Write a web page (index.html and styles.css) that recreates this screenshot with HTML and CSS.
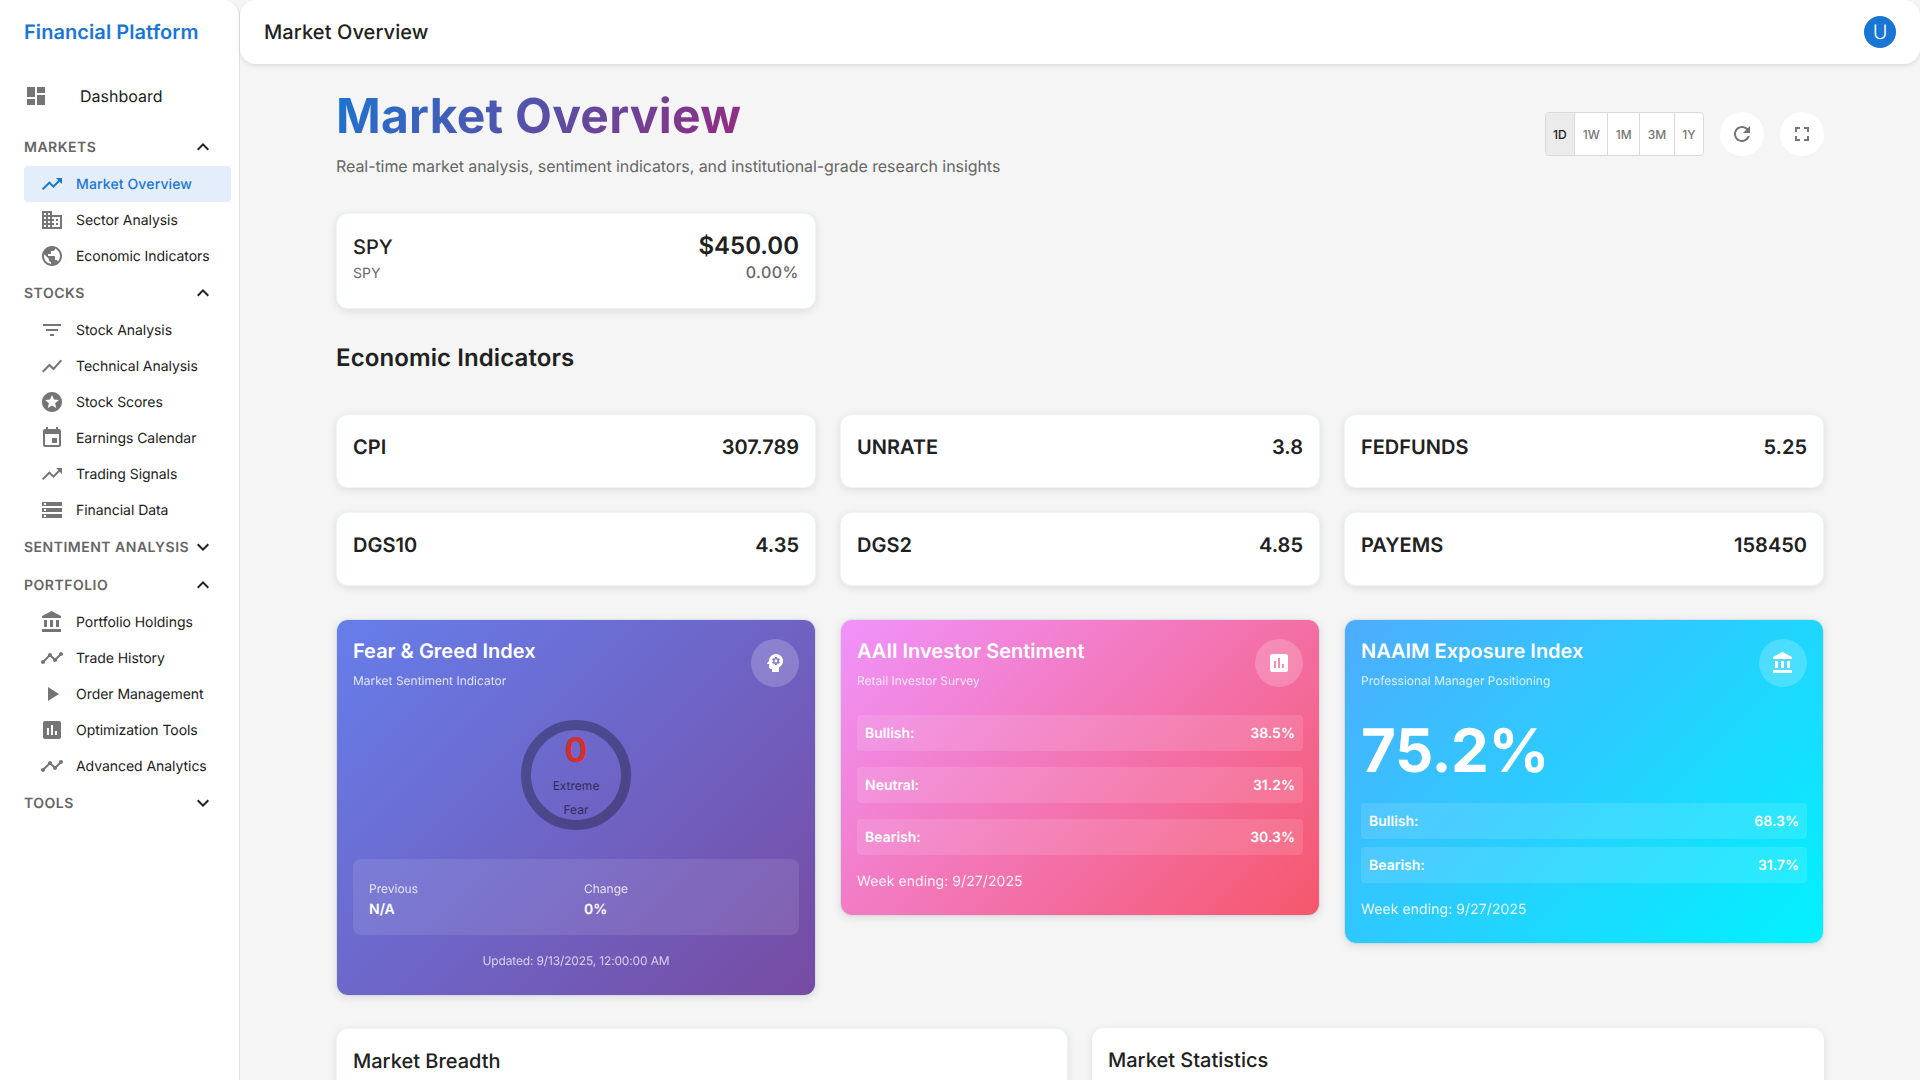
FILE: index.html
```html
<!DOCTYPE html>
<html lang="en">

<head>
    <meta charset="UTF-8">
    <meta name="viewport" content="width=device-width, initial-scale=1.0">
    <title>Market Overview</title>
    <link rel="stylesheet" href="styles.css">
</head>

<body>
    <svg class="icon-defs" aria-hidden="true">
        <symbol id="i-dashboard" viewBox="0 0 24 24"><path d="M3 13h8V3H3v10zm0 8h8v-6H3v6zm10 0h8V11h-8v10zm0-18v6h8V3h-8z"/></symbol>
        <symbol id="i-trending" viewBox="0 0 24 24"><path d="M16 6l2.29 2.29-4.88 4.88-4-4L2 16.59 3.41 18l6-6 4 4 6.3-6.29L22 12V6z"/></symbol>
        <symbol id="i-business" viewBox="0 0 24 24"><path d="M12 7V3H2v18h20V7H12zM6 19H4v-2h2v2zm0-4H4v-2h2v2zm0-4H4V9h2v2zm0-4H4V5h2v2zm4 12H8v-2h2v2zm0-4H8v-2h2v2zm0-4H8V9h2v2zm0-4H8V5h2v2zm10 12h-8v-2h2v-2h-2v-2h2v-2h-2V9h8v10zm-2-8h-2v2h2v-2zm0 4h-2v2h2v-2z"/></symbol>
        <symbol id="i-public" viewBox="0 0 24 24"><path d="M12 2C6.48 2 2 6.48 2 12s4.48 10 10 10 10-4.48 10-10S17.52 2 12 2zm-1 17.93c-3.95-.49-7-3.85-7-7.93 0-.62.08-1.21.21-1.79L9 15v1c0 1.1.9 2 2 2v1.93zm6.9-2.54c-.26-.81-1-1.39-1.9-1.39h-1v-3c0-.55-.45-1-1-1H8v-2h2c.55 0 1-.45 1-1V7h2c1.1 0 2-.9 2-2v-.41c2.93 1.19 5 4.06 5 7.41 0 2.08-.8 3.97-2.1 5.39z"/></symbol>
        <symbol id="i-filter" viewBox="0 0 24 24"><path d="M10 18h4v-2h-4v2zM3 6v2h18V6H3zm3 7h12v-2H6v2z"/></symbol>
        <symbol id="i-chart" viewBox="0 0 24 24"><path d="M3.5 18.49l6-6.01 4 4L22 6.92l-1.41-1.41-7.09 7.97-4-4L2 16.99z"/></symbol>
        <symbol id="i-stars" viewBox="0 0 24 24"><path d="M11.99 2C6.47 2 2 6.48 2 12s4.47 10 9.99 10C17.52 22 22 17.52 22 12S17.52 2 11.99 2zm4.24 16L12 15.45 7.77 18l1.12-4.81-3.73-3.23 4.92-.42L12 5l1.92 4.53 4.92.42-3.73 3.23L16.23 18z"/></symbol>
        <symbol id="i-event" viewBox="0 0 24 24"><path d="M17 12h-5v5h5v-5zM16 1v2H8V1H6v2H5c-1.11 0-1.99.9-1.99 2L3 19c0 1.1.89 2 2 2h14c1.1 0 2-.9 2-2V5c0-1.1-.9-2-2-2h-1V1h-2zm3 18H5V8h14v11z"/></symbol>
        <symbol id="i-storage" viewBox="0 0 24 24"><path d="M2 20h20v-4H2v4zm2-3h2v2H4v-2zM2 4v4h20V4H2zm4 3H4V5h2v2zm-4 7h20v-4H2v4zm2-3h2v2H4v-2z"/></symbol>
        <symbol id="i-bank" viewBox="0 0 24 24"><path d="M4 10v7h3v-7H4zm6 0v7h3v-7h-3zM2 22h19v-3H2v3zm14-12v7h3v-7h-3zm-4.5-9L2 6v2h19V6l-9.5-5z"/></symbol>
        <symbol id="i-timeline" viewBox="0 0 24 24"><path d="M23 8c0 1.1-.9 2-2 2-.18 0-.35-.02-.51-.07l-3.56 3.55c.05.16.07.34.07.52 0 1.1-.9 2-2 2s-2-.9-2-2c0-.18.02-.36.07-.52l-2.55-2.55c-.16.05-.34.07-.52.07s-.36-.02-.52-.07l-4.55 4.56c.05.16.07.33.07.51 0 1.1-.9 2-2 2s-2-.9-2-2 .9-2 2-2c.18 0 .35.02.51.07l4.56-4.55C8.02 9.36 8 9.18 8 9c0-1.1.9-2 2-2s2 .9 2 2c0 .18-.02.36-.07.52l2.55 2.55c.16-.05.34-.07.52-.07s.36.02.52.07l3.55-3.56C19.02 8.35 19 8.18 19 8c0-1.1.9-2 2-2s2 .9 2 2z"/></symbol>
        <symbol id="i-play" viewBox="0 0 24 24"><path d="M8 5v14l11-7z"/></symbol>
        <symbol id="i-assessment" viewBox="0 0 24 24"><path d="M19 3H5c-1.1 0-2 .9-2 2v14c0 1.1.9 2 2 2h14c1.1 0 2-.9 2-2V5c0-1.1-.9-2-2-2zM9 17H7v-7h2v7zm4 0h-2V7h2v10zm4 0h-2v-4h2v4z"/></symbol>
        <symbol id="i-less" viewBox="0 0 24 24"><path d="M12 8l-6 6 1.41 1.41L12 10.83l4.59 4.58L18 14z"/></symbol>
        <symbol id="i-more" viewBox="0 0 24 24"><path d="M16.59 8.59L12 13.17 7.41 8.59 6 10l6 6 6-6z"/></symbol>
        <symbol id="i-refresh" viewBox="0 0 24 24"><path d="M17.65 6.35C16.2 4.9 14.21 4 12 4c-4.42 0-7.99 3.58-7.99 8s3.57 8 7.99 8c3.73 0 6.84-2.55 7.73-6h-2.08c-.82 2.33-3.04 4-5.65 4-3.31 0-6-2.69-6-6s2.69-6 6-6c1.66 0 3.14.69 4.22 1.78L13 11h7V4l-2.35 2.35z"/></symbol>
        <symbol id="i-fullscreen" viewBox="0 0 24 24"><path d="M7 14H5v5h5v-2H7v-3zm-2-4h2V7h3V5H5v5zm12 7h-3v2h5v-5h-2v3zM14 5v2h3v3h2V5h-5z"/></symbol>
        <symbol id="i-psychology" viewBox="0 0 24 24"><path d="M13 8.57c-.79 0-1.43.64-1.43 1.43s.64 1.43 1.43 1.43 1.43-.64 1.43-1.43-.64-1.43-1.43-1.43z"/><path d="M13 3C9.25 3 6.2 5.94 6.02 9.64L4.1 12.2c-.25.33-.01.8.4.8H6v3c0 1.1.9 2 2 2h1v3h7v-4.68c2.36-1.12 4-3.53 4-6.32 0-3.87-3.13-7-7-7zm3 7c0 .13-.01.26-.02.39l.83.66c.08.06.1.16.05.25l-.8 1.39c-.05.09-.16.12-.24.09l-.99-.4c-.21.16-.43.29-.67.39L14 13.83c-.01.1-.1.17-.2.17h-1.6c-.1 0-.18-.07-.2-.17l-.15-1.06c-.25-.1-.47-.23-.68-.39l-.99.4c-.09.03-.2 0-.25-.09l-.8-1.39c-.05-.08-.03-.19.05-.25l.84-.66c-.01-.13-.02-.26-.02-.39s.02-.27.04-.39l-.85-.66c-.08-.06-.1-.16-.05-.26l.8-1.38c.05-.09.15-.12.24-.09l1 .4c.2-.15.43-.29.67-.39L12 6.17c.02-.1.1-.17.2-.17h1.6c.1 0 .18.07.2.17l.15 1.06c.24.1.46.23.67.39l1-.4c.09-.03.2 0 .24.09l.8 1.38c.05.09.03.2-.05.26l-.85.66c.03.12.04.25.04.39z"/></symbol>
    </svg>

    <div class="app">
        <aside class="sidebar">
            <div class="brand">Financial Platform</div>
            <a class="dash-link"><svg class="icon"><use href="#i-dashboard"/></svg><span>Dashboard</span></a>

            <div class="nav-head"><span>MARKETS</span><svg class="icon chevron"><use href="#i-less"/></svg></div>
            <a class="nav-item active"><svg class="icon"><use href="#i-trending"/></svg><span>Market Overview</span></a>
            <a class="nav-item"><svg class="icon"><use href="#i-business"/></svg><span>Sector Analysis</span></a>
            <a class="nav-item"><svg class="icon"><use href="#i-public"/></svg><span>Economic Indicators</span></a>

            <div class="nav-head"><span>STOCKS</span><svg class="icon chevron"><use href="#i-less"/></svg></div>
            <a class="nav-item"><svg class="icon"><use href="#i-filter"/></svg><span>Stock Analysis</span></a>
            <a class="nav-item"><svg class="icon"><use href="#i-chart"/></svg><span>Technical Analysis</span></a>
            <a class="nav-item"><svg class="icon"><use href="#i-stars"/></svg><span>Stock Scores</span></a>
            <a class="nav-item"><svg class="icon"><use href="#i-event"/></svg><span>Earnings Calendar</span></a>
            <a class="nav-item"><svg class="icon"><use href="#i-trending"/></svg><span>Trading Signals</span></a>
            <a class="nav-item"><svg class="icon"><use href="#i-storage"/></svg><span>Financial Data</span></a>

            <div class="nav-head"><span>SENTIMENT ANALYSIS</span><svg class="icon chevron"><use href="#i-more"/></svg></div>

            <div class="nav-head"><span>PORTFOLIO</span><svg class="icon chevron"><use href="#i-less"/></svg></div>
            <a class="nav-item"><svg class="icon"><use href="#i-bank"/></svg><span>Portfolio Holdings</span></a>
            <a class="nav-item"><svg class="icon"><use href="#i-timeline"/></svg><span>Trade History</span></a>
            <a class="nav-item"><svg class="icon"><use href="#i-play"/></svg><span>Order Management</span></a>
            <a class="nav-item"><svg class="icon"><use href="#i-assessment"/></svg><span>Optimization Tools</span></a>
            <a class="nav-item"><svg class="icon"><use href="#i-timeline"/></svg><span>Advanced Analytics</span></a>

            <div class="nav-head"><span>TOOLS</span><svg class="icon chevron"><use href="#i-more"/></svg></div>
        </aside>

        <div class="main">
            <header class="topbar">
                <div class="topbar-title">Market Overview</div>
                <div class="avatar">U</div>
            </header>

            <main class="content">
                <div class="page-head">
                    <div>
                        <h1>Market Overview</h1>
                        <p class="subtitle">Real-time market analysis, sentiment indicators, and institutional-grade research insights</p>
                    </div>
                    <div class="head-tools">
                        <div class="timeframes">
                            <button class="selected">1D</button>
                            <button>1W</button>
                            <button>1M</button>
                            <button>3M</button>
                            <button>1Y</button>
                        </div>
                        <button class="round-btn"><svg class="icon"><use href="#i-refresh"/></svg></button>
                        <button class="round-btn"><svg class="icon"><use href="#i-fullscreen"/></svg></button>
                    </div>
                </div>

                <div class="grid-3">
                    <div class="card quote">
                        <div>
                            <div class="quote-name">SPY</div>
                            <div class="quote-sub">SPY</div>
                        </div>
                        <div class="quote-right">
                            <div class="quote-price">$450.00</div>
                            <div class="quote-change">0.00%</div>
                        </div>
                    </div>
                </div>

                <h2 class="section-title">Economic Indicators</h2>

                <div class="grid-3 indicators">
                    <div class="card indicator"><span>CPI</span><span>307.789</span></div>
                    <div class="card indicator"><span>UNRATE</span><span>3.8</span></div>
                    <div class="card indicator"><span>FEDFUNDS</span><span>5.25</span></div>
                    <div class="card indicator"><span>DGS10</span><span>4.35</span></div>
                    <div class="card indicator"><span>DGS2</span><span>4.85</span></div>
                    <div class="card indicator"><span>PAYEMS</span><span>158450</span></div>
                </div>

                <div class="grid-3 sentiment">
                    <div class="card grad grad-fear">
                        <div class="grad-head">
                            <div>
                                <div class="grad-title">Fear &amp; Greed Index</div>
                                <div class="grad-sub">Market Sentiment Indicator</div>
                            </div>
                            <div class="grad-icon"><svg class="icon"><use href="#i-psychology"/></svg></div>
                        </div>
                        <div class="gauge">
                            <div class="gauge-ring"></div>
                            <div class="gauge-text">
                                <div class="gauge-value">0</div>
                                <div class="gauge-label">Extreme Fear</div>
                            </div>
                        </div>
                        <div class="fear-stats">
                            <div>
                                <div class="stat-label">Previous</div>
                                <div class="stat-value">N/A</div>
                            </div>
                            <div>
                                <div class="stat-label">Change</div>
                                <div class="stat-value">0%</div>
                            </div>
                        </div>
                        <div class="fear-updated">Updated: 9/13/2025, 12:00:00 AM</div>
                    </div>

                    <div class="card grad grad-aaii">
                        <div class="grad-head">
                            <div>
                                <div class="grad-title">AAII Investor Sentiment</div>
                                <div class="grad-sub">Retail Investor Survey</div>
                            </div>
                            <div class="grad-icon"><svg class="icon"><use href="#i-assessment"/></svg></div>
                        </div>
                        <div class="rows rows-wide">
                            <div class="row"><span>Bullish:</span><span>38.5%</span></div>
                            <div class="row"><span>Neutral:</span><span>31.2%</span></div>
                            <div class="row"><span>Bearish:</span><span>30.3%</span></div>
                        </div>
                        <div class="week">Week ending: 9/27/2025</div>
                    </div>

                    <div class="card grad grad-naaim">
                        <div class="grad-head">
                            <div>
                                <div class="grad-title">NAAIM Exposure Index</div>
                                <div class="grad-sub">Professional Manager Positioning</div>
                            </div>
                            <div class="grad-icon"><svg class="icon"><use href="#i-bank"/></svg></div>
                        </div>
                        <div class="big-number">75.2%</div>
                        <div class="rows">
                            <div class="row"><span>Bullish:</span><span>68.3%</span></div>
                            <div class="row"><span>Bearish:</span><span>31.7%</span></div>
                        </div>
                        <div class="week">Week ending: 9/27/2025</div>
                    </div>
                </div>

                <div class="grid-2">
                    <div class="card bottom-card"><div class="bottom-title">Market Breadth</div></div>
                    <div class="bottom-card plain"><div class="bottom-title">Market Statistics</div></div>
                </div>
            </main>
        </div>
    </div>
</body>

</html>
```

FILE: styles.css
```css
* {
    margin: 0;
    padding: 0;
    box-sizing: border-box;
}

body,
html {
    height: 100vh;
    overflow: hidden;
}

body {
    font-family: Inter, "Liberation Sans", sans-serif;
    text-rendering: geometricPrecision;
    background: #f5f5f5;
    color: #212121;
}

.icon-defs {
    display: none;
}

.icon {
    width: 24px;
    height: 24px;
    flex: none;
    fill: #757575;
}

.app {
    display: flex;
    height: 100vh;
}

/* sidebar */
.sidebar {
    width: 240px;
    flex: none;
    background: white;
    border-right: 1px solid #e0e0e0;
    border-top-right-radius: 16px;
}

.brand {
    height: 64px;
    padding-left: 24px;
    display: flex;
    align-items: center;
    font-size: 20px;
    font-weight: 600;
    letter-spacing: 0.07px;
    color: #1976d2;
}

.dash-link {
    display: flex;
    align-items: center;
    height: 48px;
    margin: 8px 0;
    padding-left: 24px;
    font-size: 16px;
}

.dash-link span {
    margin-left: 32px;
}

.nav-head {
    display: flex;
    align-items: center;
    justify-content: space-between;
    height: 38px;
    padding: 0 24px;
    font-size: 14px;
    font-weight: 600;
    letter-spacing: 0.5px;
    white-space: nowrap;
    color: #666;
}

.chevron {
    fill: #212121;
}

.nav-item {
    display: flex;
    align-items: center;
    gap: 12px;
    height: 36px;
    margin: 0 8px 0 24px;
    padding-left: 16px;
    border-radius: 4px;
    font-size: 14px;
    letter-spacing: -0.05px;
}

.nav-item.active {
    background: rgba(25, 118, 210, 0.12);
    color: #1976d2;
    font-weight: 500;
    letter-spacing: 0.13px;
}

.nav-item.active .icon {
    fill: #1976d2;
}

/* top bar */
.main {
    flex: 1;
    min-width: 0;
}

.topbar {
    height: 64px;
    padding: 0 24px;
    display: flex;
    align-items: center;
    justify-content: space-between;
    background: white;
    border-radius: 16px;
    box-shadow: 0 2px 4px rgba(0, 0, 0, 0.1);
}

.topbar-title {
    font-size: 20px;
    font-weight: 500;
    letter-spacing: 0.1px;
}

.avatar {
    width: 32px;
    height: 32px;
    border-radius: 50%;
    background: #1976d2;
    color: white;
    display: flex;
    align-items: center;
    justify-content: center;
    font-size: 20px;
    font-weight: 300;
}

/* page */
.content {
    padding: 23px 96px 0;
}

.page-head {
    display: flex;
    justify-content: space-between;
    align-items: center;
    margin-bottom: 35px;
}

h1 {
    font-size: 48px;
    font-weight: 700;
    line-height: 58px;
    letter-spacing: 0.25px;
    margin-bottom: 9px;
    background: linear-gradient(135deg, #1976d2, #dc004e);
    -webkit-background-clip: text;
    background-clip: text;
    color: transparent;
}

.subtitle {
    font-size: 16px;
    line-height: 24px;
    letter-spacing: -0.07px;
    color: #666;
}

.head-tools {
    display: flex;
    align-items: center;
    gap: 16px;
    margin-top: 3px;
}

.timeframes {
    display: flex;
    height: 44px;
    background: white;
    border: 1px solid #d9d9d9;
    border-radius: 4px;
    overflow: hidden;
}

.timeframes button {
    border: none;
    border-right: 1px solid #d9d9d9;
    background: none;
    padding: 0 7.5px;
    font-family: inherit;
    font-size: 12px;
    font-weight: 500;
    color: #757575;
}

.timeframes button:last-child {
    border-right: none;
}

.timeframes .selected {
    background: #ebebeb;
    color: #212121;
}

.round-btn {
    width: 44px;
    height: 44px;
    border: none;
    border-radius: 50%;
    background: white;
    display: flex;
    align-items: center;
    justify-content: center;
}

.grid-3 {
    display: grid;
    grid-template-columns: repeat(3, 1fr);
    gap: 24px;
}

.grid-2 {
    display: grid;
    grid-template-columns: repeat(2, 1fr);
    gap: 24px;
    margin-top: 32px;
}

.card {
    background: white;
    border: 1px solid rgba(25, 118, 210, 0.08);
    border-radius: 12px;
    box-shadow: 0 2px 8px rgba(0, 0, 0, 0.1);
}

.quote {
    display: flex;
    justify-content: space-between;
    padding: 16px 16px 24px;
}

.quote-name {
    font-size: 20px;
    font-weight: 500;
    line-height: 34px;
}

.quote-sub {
    font-size: 14px;
    line-height: 20px;
    color: #666;
}

.quote-right {
    text-align: right;
}

.quote-price {
    font-size: 24px;
    font-weight: 600;
    line-height: 31px;
}

.quote-change {
    font-size: 16px;
    font-weight: 500;
    line-height: 23px;
    letter-spacing: 0.5px;
    color: #666;
}

.section-title {
    font-size: 24px;
    font-weight: 600;
    line-height: 32px;
    letter-spacing: 0.1px;
    margin: 33px 0 40px;
}

.indicator {
    display: flex;
    justify-content: space-between;
    padding: 16px 16px 24px;
    font-size: 20px;
    line-height: 32px;
    font-weight: 600;
}

.sentiment {
    align-items: start;
    margin-top: 33px;
}

/* gradient cards */
.grad {
    padding: 16px 16px 24px;
    color: white;
    background-clip: padding-box;
}

.grad .icon {
    fill: white;
}

.grad-fear {
    background-image: linear-gradient(135deg, #667eea 0%, #764ba2 100%);
}

.grad-aaii {
    background-image: linear-gradient(135deg, #f093fb 0%, #f5576c 100%);
}

.grad-naaim {
    background-image: linear-gradient(135deg, #4facfe 0%, #00f2fe 100%);
}

.grad-head {
    display: flex;
    justify-content: space-between;
    align-items: flex-start;
    height: 79px;
}

.grad-title {
    font-size: 20px;
    font-weight: 600;
    line-height: 30px;
}

.grad-sub {
    font-size: 12px;
    line-height: 20px;
    margin-top: 5px;
    opacity: 0.8;
}

.grad-icon {
    width: 48px;
    height: 48px;
    margin-top: 3px;
    border-radius: 50%;
    background: rgba(255, 255, 255, 0.2);
    display: flex;
    align-items: center;
    justify-content: center;
}

.gauge {
    display: grid;
    justify-content: center;
    align-items: center;
    width: 110px;
    height: 110px;
    margin: 5px auto 0;
}

.gauge-ring,
.gauge-text {
    grid-area: 1 / 1;
}

.gauge-ring {
    width: 110px;
    height: 110px;
    border: 10px solid rgba(0, 0, 0, 0.3);
    border-radius: 50%;
}

.gauge-text {
    width: 90px;
    text-align: center;
    margin: 0 auto;
}

.gauge-value {
    font-size: 34px;
    font-weight: 700;
    line-height: 46px;
    color: #d32f2f;
}

.gauge-label {
    font-size: 12px;
    line-height: 24px;
    color: rgba(0, 0, 0, 0.6);
    padding: 0 10px;
}

.fear-stats {
    display: grid;
    grid-template-columns: 1fr 1fr;
    gap: 16px;
    margin-top: 29px;
    padding: 20px 16px 16px;
    border-radius: 8px;
    background: rgba(255, 255, 255, 0.1);
}

.stat-label {
    font-size: 12px;
    line-height: 20px;
    opacity: 0.8;
}

.stat-value {
    font-size: 14px;
    font-weight: 600;
    line-height: 21px;
    margin-bottom: -1px;
}

.fear-updated {
    margin-top: 16px;
    font-size: 12px;
    line-height: 20px;
    letter-spacing: -0.15px;
    text-align: center;
    opacity: 0.7;
}

.rows {
    display: flex;
    flex-direction: column;
    gap: 8px;
}

.rows-wide {
    gap: 16px;
}

.row {
    display: flex;
    justify-content: space-between;
    align-items: center;
    height: 36px;
    padding: 0 8px;
    border-radius: 4px;
    background: rgba(255, 255, 255, 0.12);
    font-size: 14px;
    font-weight: 600;
}

.week {
    margin: 17px 0 -1px;
    font-size: 14px;
    line-height: 20px;
    letter-spacing: 0.08px;
    opacity: 0.9;
}

.big-number {
    font-size: 60px;
    font-weight: 700;
    line-height: 72px;
    letter-spacing: -0.4px;
    margin-bottom: 16px;
}

.bottom-card {
    padding: 16px;
    height: 200px;
    border-radius: 12px;
    background: white;
}

.bottom-card.plain {
    box-shadow: 0 2px 8px rgba(0, 0, 0, 0.1);
}

.bottom-title {
    font-size: 20px;
    font-weight: 500;
    line-height: 32px;
}
```
